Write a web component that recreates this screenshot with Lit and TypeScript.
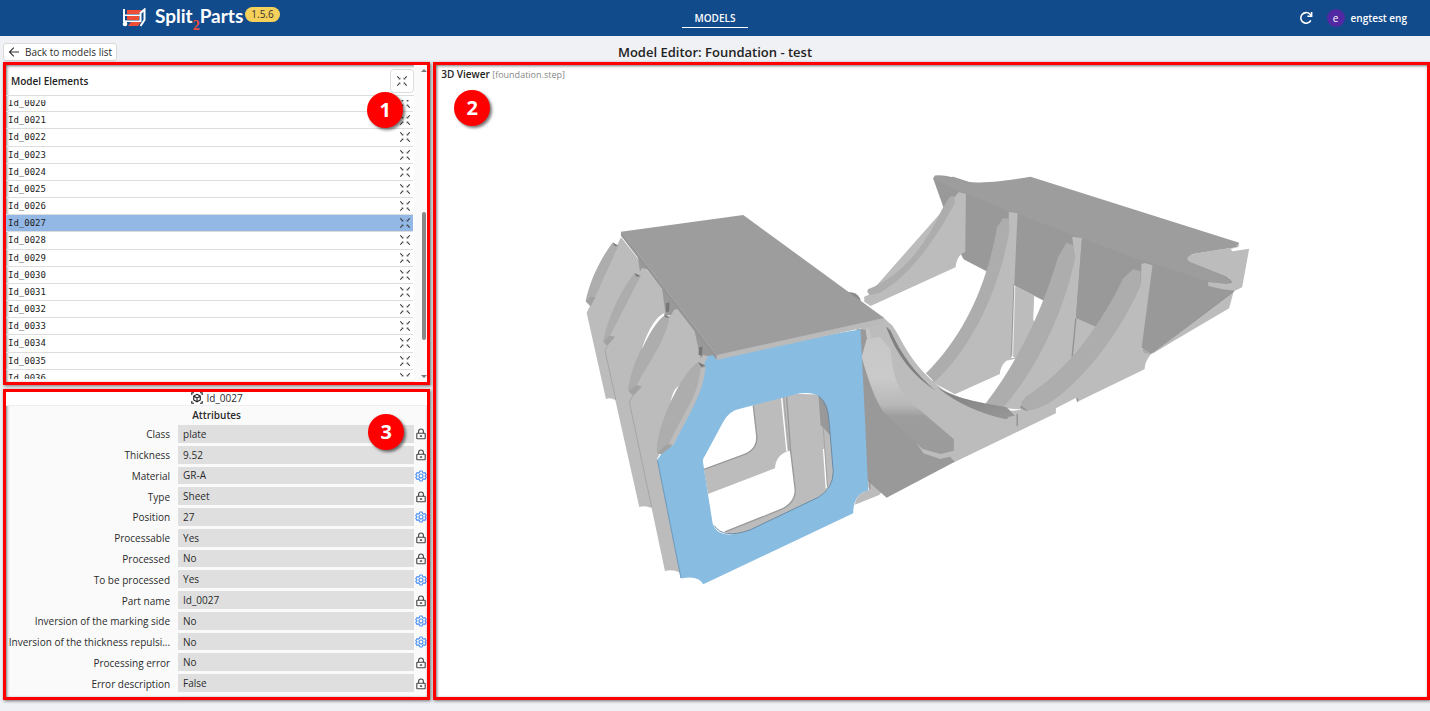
import { LitElement, html, css } from "lit";
import { customElement, property, state } from "lit/decorators.js";
import { classMap } from "lit/directives/class-map.js";

const focusIcon = html`<svg viewBox="0 0 12 12" width="12" height="12" aria-hidden="true">
  <g fill="none" stroke="#333" stroke-width="1.1">
    <path d="M1.300 1.300 3.300 3.500M10.700 1.300 8.700 3.500M1.300 10.700 3.300 8.500M10.700 10.700 8.700 8.500"/>
  </g>
  <path fill="#333" d="M4.300 4.500V2.500L2.400 4.200zM7.700 4.500V2.500l1.900 1.700zM4.300 7.500v2L2.400 7.800zM7.700 7.500v2l1.900-1.700z"/>
</svg>`;

const lockIcon = html`<svg viewBox="0 0 12 12" width="12" height="12" role="img" aria-label="Locked">
  <g fill="none" stroke="#444" stroke-width="1.1">
    <rect x="1.8" y="5.2" width="8.4" height="5.6" rx=".6"/>
    <path d="M3.6 5.2V3.4a2.4 2.4 0 0 1 4.8 0v1.8M6 7.2v1.8M4.8 8h2.4"/>
  </g>
</svg>`;

const gearIcon = html`<svg viewBox="0 0 24 24" width="12" height="12" role="img" aria-label="Editable">
  <g fill="none" stroke="#4a90f2" stroke-width="2.2" stroke-linejoin="round">
    <path d="M9.600 2h4.800l.7 3 2.100 1.200 3-.9 2.300 4.100-2.200 2.100v1l2.200 2.100-2.300 4.100-3-.9-2.100 1.200-.7 3H9.600l-.7-3-2.100-1.200-3 .9-2.300-4.100 2.200-2.100v-1L1.500 9.400l2.300-4.100 3 .9L8.900 5z"/>
    <circle cx="12" cy="12" r="4"/>
  </g>
</svg>`;

@customElement("model-scene")
class ModelScene extends LitElement {
  static styles = css`
    :host { display: block; }
    .scene { display: block; width: 100%; height: 100%; }
  `;

  render() {
    return html`
      <svg class="scene" viewBox="436 65 991 632" role="img" aria-label="Foundation model">
        <defs>
          <linearGradient id="bend" x1="0" y1="110" x2="0" y2="462" gradientUnits="userSpaceOnUse">
            <stop offset="0" stop-color="#c7c7c7"/><stop offset=".35" stop-color="#cacaca"/>
            <stop offset=".58" stop-color="#b8b8b8"/><stop offset=".68" stop-color="#9d9d9d"/>
            <stop offset="1" stop-color="#9b9b9b"/>
          </linearGradient>
          <linearGradient id="strip" x1="0" y1="0" x2="1" y2="1">
            <stop offset="0" stop-color="#7d7d7d"/><stop offset="1" stop-color="#999"/>
          </linearGradient>
        </defs>

        <!-- rear hull plate with its four ribs -->
        <g transform="translate(840 160) scale(.33333)">
          <path fill="#bcbcbc" d="M935 583 1182 392 1168 445 1010 538z"/>
          <path fill="#999" d="M280 56 310 140 362 275Q366 295 375 300L525 378 612 422 765 497 900 560 933 583 1185 392 1175 360 1100 300 340 50z"/>
          <path fill="#9d9d9d" d="M279 56 285 46Q318 44 345 55C370 68 410 76 572 50L1198 248 1190 262 1060 282Q1035 292 1045 305L1178 362 1150 374 1100 362 860 285 520 157 350 90z"/>
          <path fill="#bcbcbc" d="M1198 248 1196 261 1172 267 1178 274 1228 266 1207 382 1185 392 1148 388 1105 378V366L1160 372 1178 368 1170 354 1060 310Q1032 300 1048 287 1065 278 1190 262z"/>
          <path stroke="#888" stroke-width="2" d="M940 578 1182 394"/>
          <path fill="#bcbcbc" d="M345 110 357 96 378 102 376 276Q350 285 347 322L92 438 73 425V410L85 405z"/>
          <path fill="#adadad" d="M345 128 342 108 330 110 308 145C250 270 180 350 84 388L82 397 92 406 120 398C200 355 285 245 345 128z"/>
          <path fill="#bcbcbc" d="M525 378 583 407 580 480 596 500 560 590 528 596 480 560z"/>
          <path fill="#bcbcbc" d="M507 155 533 160 513 597Q485 605 480 642L345 703 275 665 420 470 505 215z"/>
          <path fill="none" stroke="#8b8b8b" stroke-width="2" d="M522 375 514 592"/>
          <path fill="none" stroke="#fff" stroke-width="2" d="M525 376 518 592"/>
          <path fill="#bcbcbc" d="M514 594H530L522 612 500 605z"/>
          <path fill="#fff" d="M528 596 500 602Q482 615 480 642L510 660z"/>
          <path fill="#adadad" d="M508 190 506 176 490 174 472 200C440 380 370 530 258 640L284 666C400 560 480 380 508 215z"/>
          <path fill="#bcbcbc" d="M697 230 726 234 708 475 765 497 810 515 760 620 560 750 440 740 640 430 705 295z"/>
          <path fill="none" stroke="#929292" stroke-width="4" d="M708 475 697 590"/>
          <path fill="#adadad" d="M704 282 699 255 680 248 655 290C605 460 530 610 436 732L490 742C600 620 675 440 706 295z"/>
          <path fill="#bcbcbc" d="M905 312 915 309 938 316 905 566 933 583Q915 605 914 628L713 725 709 713 648 745V760L345 905 270 770 540 750 750 610 903 370z"/>
          <path fill="#999" d="M726 240 903 308 880 328 850 355 768 500 708 475z"/>
          <path fill="#a8a8a8" d="M905 564 933 582 912 578z"/>
          <path fill="#adadad" d="M902 355 903 334 880 328 850 355C790 480 690 630 560 708L545 725 543 740 562 752C610 745 640 725 690 680 790 590 865 465 903 375z"/>
          <path fill="#929292" d="M543 737 562 750V756L540 742zM709 713 715 716V725H711z"/>
        </g>

        <!-- front cradle and bent plate -->
        <g transform="translate(840 300) scale(.33333)">
          <path fill="#bcbcbc" d="M75 535 130 570 118 585 45 614Q48 580 88 570z"/>
          <path fill="#bcbcbc" d="M62 85 133 55 155 75C195 165 235 230 300 265 365 300 430 315 500 325L532 343 560 330 560 380 345 485 240 520 65 170z"/>
          <path fill="#bcbcbc" d="M137 68 155 74C185 110 200 180 300 262L340 292 300 278 220 210z"/>
          <path fill="#808080" d="M140 80 152 92C185 165 225 220 288 272 220 230 170 165 140 84z"/>
          <path fill="url(#strip)" d="M292 260C340 295 415 305 500 322L525 347 508 350 500 358C420 340 340 305 292 260z"/>
          <path fill="none" stroke="#909090" stroke-width="4" d="M532 341V378"/>
          <path fill="#999" d="M50 85 75 535 140 593 345 485 330 470 300 476 250 458 140 300 82 118 78 90z"/>
          <path fill="#bcbcbc" d="M248 445 300 460 325 455 342 449 340 468 300 476 249 459z"/>
          <path fill="#c5c5c5" d="M77 88 86 85 95 115 82 118z"/>
          <path fill="url(#bend)" d="M80 118 120 110 152 148C160 250 185 290 240 330L342 418V452L302 462 248 447 130 335C100 290 85 235 65 172z"/>
          <path fill="none" stroke="#8c8c8c" stroke-width="3" d="M90 540V568"/>
        </g>

        <!-- left box with the highlighted plate -->
        <g transform="translate(570 200) scale(.33333)">
          <path fill="#bcbcbc" d="M153 112 142 135 128 128C90 180 65 235 48 305L60 318 50 338 108 597Q122 592 136 600L208 921Q225 915 245 924L285 1113Q310 1108 328 1117L345 1100 262 775 415 500 440 470z"/>
          <path fill="none" stroke="#a6a6a6" stroke-width="3" d="M112 437 105 452 138 600M190 587 178 605 245 921M262 780 333 1130"/>
          <path fill="#adadad" d="M128 128 145 137 75 292 62 318 47 304C60 240 90 180 128 128zM195 220 212 228 120 408 135 410 112 437 100 425C110 365 150 270 195 220zM283 342 299 352C285 425 230 500 200 556L215 560 190 587 174 572C180 500 235 395 283 342z"/>
          <path fill="#a2a2a2" d="M62 290 77 292 62 318 48 303zM118 407 135 410 112 437 101 424zM200 555 215 560 190 587 176 572z"/>
          <path fill="#777" d="M128 127 144 137 135 138zM193 219 212 228 200 230zM281 341 299 353 286 352z"/>
          <path fill="#fff" d="M283 340C255 350 228 405 216 448 235 405 262 360 283 347zM333 554Q305 565 300 622L315 590zM287 338 300 334 298 349z"/>
          <path fill="#999" d="M203 165 240 210 216 204 210 215zM276 262 323 326 312 330 303 345H287zM372 385 440 475 400 465 392 475z"/>
          <path fill="#777" d="M288 310 299 307 297 335H288zM387 442 398 440 396 466 386 465z"/>
          <path fill="#adadad" d="M385 486 407 499C400 590 350 650 308 737L280 765 262 758C252 700 330 520 385 486z"/>
          <path fill="#bcbcbc" d="M405 503 408 510C400 590 360 650 310 735L298 730C340 640 385 590 392 505z"/>
          <path fill="#a2a2a2" d="M290 733 308 737 280 766 262 758z"/>
          <path fill="#777" d="M384 486 407 497 394 501z"/>
          <path fill="#8a8a8a" d="M832 276Q860 275 870 295L875 310 860 300z"/>
          <path fill="#fff" d="M875 290H882V310L876 306z"/>

          <!-- interior seen through the opening -->
          <g transform="translate(0 540)">
            <path fill="#bcbcbc" d="M550 76 560 165Q565 208 520 225L402 268 414 342 615 265Q618 220 662 212L676 330Q676 370 630 390L465 456 500 468 560 450 745 360 795 300 780 45 640 40z"/>
            <path fill="none" stroke="#999" stroke-width="4" d="M550 76 560 165Q565 208 520 225L402 268M650 50 662 212 676 330Q676 370 630 390L465 456"/>
            <path fill="#999" d="M745 40 785 60 785 170 752 135z"/>
            <path fill="none" stroke="#fff" stroke-width="4" d="M635 52 651 214M761 207 769 325"/>
            <path fill="none" stroke="#999" stroke-width="2" d="M641 50 657 212M760 145 773 320"/>
            <path fill="#89bce1" fill-rule="evenodd" d="M415-72 872-152 876-70 882 50 895 332Q850 340 850 400L400 613Q385 585 333 596L262 240 272 225 310 195C370 80 400 35 407-40L403-50zM399 245Q398 235 405 227L460 125Q478 92 510 86L690 40Q772 30 777 110L790 275Q790 325 745 352L540 450Q445 485 428 430L414 342z"/>
            <path fill="none" stroke="#6b8ca5" stroke-width="3" d="M433 437Q460 478 540 450L745 352Q790 325 790 275L778 130Q775 70 745 48"/>
            <path fill="none" stroke="#6f9cbe" stroke-width="3" d="M263 242 333 594"/>
          </g>
          <path fill="#bababa" d="M437 463 942 353V370L440 480z"/>
          <path fill="#969696" d="M153 94 440 464V479L153 107z"/>
          <path fill="#9d9d9d" d="M153 95 520 45 835 275 943 354 440 465z"/>
        </g>
      </svg>
    `;
  }
}

interface Attribute { label: string; value: string; editable: boolean; }

@customElement("attribute-table")
class AttributeTable extends LitElement {
  @property({ attribute: false }) items: Attribute[] = [];

  static styles = css`
    :host { display: grid; grid-auto-rows: 1fr; min-height: 0; }
    .row {
      display: grid;
      grid-template-columns: 172fr 237fr 12px;
      align-items: stretch;
      min-height: 0;
    }
    .label {
      align-self: center;
      justify-self: end;
      padding-right: 8px;
      white-space: nowrap;
      line-height: 18px;
    }
    .value {
      min-width: 0;
      min-height: 0;
      margin: 1px 1px 2px 0;
      padding: 0 5px;
      border: 0;
      border-radius: 0;
      background: #dfdfdf;
      color: inherit;
      font: inherit;
      outline: none;
    }
    .icon { display: flex; align-items: center; }
  `;

  render() {
    return this.items.map((item, i) => html`
      <div class="row">
        <label class="label" for="attribute-${i}">${item.label}</label>
        <input class="value" id="attribute-${i}" readonly .value=${item.value}>
        <span class="icon">${item.editable ? gearIcon : lockIcon}</span>
      </div>
    `);
  }
}

@customElement("app-root")
class AppRoot extends LitElement {
  @state() private selected = "Id_0027";

  private elementIds = Array.from({ length: 17 }, (_, i) => `Id_00${20 + i}`);

  private partAttributes: Attribute[] = [
    { label: "Class", value: "plate", editable: false },
    { label: "Thickness", value: "9.52", editable: false },
    { label: "Material", value: "GR-A", editable: true },
    { label: "Type", value: "Sheet", editable: false },
    { label: "Position", value: "27", editable: true },
    { label: "Processable", value: "Yes", editable: false },
    { label: "Processed", value: "No", editable: false },
    { label: "To be processed", value: "Yes", editable: true },
    { label: "Part name", value: "Id_0027", editable: false },
    { label: "Inversion of the marking side", value: "No", editable: true },
    { label: "Inversion of the thickness repulsi...", value: "No", editable: true },
    { label: "Processing error", value: "No", editable: false },
    { label: "Error description", value: "False", editable: false },
  ];

  static styles = css`
    :host {
      display: flex;
      flex-direction: column;
      height: 100vh;
      overflow: hidden;
      background: #f0f1f5;
      color: #2b2b2b;
      font: 10px/16px "Open Sans", "Noto Sans", sans-serif;
    }
    button { font: inherit; color: inherit; cursor: pointer; }
    svg { display: block; }

    .topbar {
      display: grid;
      grid-template-columns: 1fr auto 1fr;
      align-items: center;
      height: 36px;
      flex: none;
      background: #124b8b;
      color: #fff;
      font-weight: 600;
    }
    .brand { display: flex; align-items: center; padding-left: 122px; }
    .name {
      display: flex;
      margin: -4px 0 0 8px;
      font: 700 19px/24px Lato, sans-serif;
    }
    .two {
      align-self: flex-end;
      margin-bottom: -6px;
      color: #ee4f37;
      font: 700 14px/16px "Liberation Serif", serif;
    }
    .version {
      margin: -8px 0 0 2px;
      padding: 0 6px;
      border-radius: 8px;
      background: #f5d05a;
      color: #333;
      line-height: 15px;
      font-weight: 400;
    }
    .tab {
      padding: 0 13px;
      border-bottom: 1px solid #fff;
      color: inherit;
      line-height: 18px;
      text-decoration: none;
    }
    .account {
      display: flex;
      align-items: center;
      justify-content: flex-end;
      padding-right: 23px;
    }
    .refresh { padding: 0; margin-right: 14px; border: 0; background: none; }
    .avatar {
      width: 18px;
      margin-right: 6px;
      border-radius: 50%;
      background: #5229a3;
      line-height: 18px;
      font-weight: 400;
      text-align: center;
    }

    .subbar {
      display: grid;
      grid-template-columns: 1fr auto 1fr;
      align-items: end;
      height: 26px;
      flex: none;
    }
    .back {
      display: flex;
      align-items: center;
      justify-self: start;
      gap: 5px;
      height: 18px;
      margin: 0 0 1px 3px;
      padding: 0 4px;
      border: 1px solid #d9d9d9;
      border-radius: 3px;
      background: #fff;
    }
    .title {
      margin: 0;
      color: #222;
      font-size: 13px;
      line-height: 20px;
      font-weight: 600;
    }

    .workspace {
      display: grid;
      grid-template-columns: 3fr 7fr;
      gap: 3px;
      flex: 1;
      min-height: 0;
      padding: 0 0 11px 3px;
    }
    .side {
      display: grid;
      grid-template-rows: 323fr 311fr;
      gap: 4px;
      min-width: 0;
      min-height: 0;
    }
    .panel {
      position: relative;
      box-sizing: border-box;
      min-width: 0;
      min-height: 0;
      border: 3px solid #f00;
      background: #fff;
      box-shadow: 1px 1px 3px #0008, inset 1px 1px 3px #0008;
    }
    .marker {
      position: absolute;
      width: 36px;
      border-radius: 50%;
      background: #f00;
      box-shadow: 2px 2px 3px #0008;
      color: #fff;
      font: 700 20px/36px "Noto Sans", "DejaVu Sans", sans-serif;
      text-align: center;
    }
    .marker.list { top: 27px; right: 24px; }
    .marker.view { top: 25px; left: 18px; }
    .marker.attrs { top: 22px; right: 23px; }

    .elements {
      display: grid;
      grid-template-columns: 1fr 13px;
    }
    .listing { display: flex; flex-direction: column; min-width: 0; min-height: 0; }
    .listing-head {
      display: flex;
      align-items: center;
      justify-content: space-between;
      height: 29px;
      flex: none;
      padding: 1px 0 0 5px;
      border-bottom: 1px solid #ddd;
      color: #222;
    }
    .heading { margin: 0; font-size: 10px; line-height: 16px; font-weight: 600; }
    .fit {
      display: grid;
      place-items: center;
      width: 24px;
      height: 24px;
      padding: 0;
      border: 1px solid #ddd;
      border-radius: 4px;
      background: #fff;
    }
    .clip { display: flex; flex: 1; min-height: 0; margin: 4px 1px 3px 0; overflow: hidden; }
    .rows {
      display: flex;
      flex-direction: column;
      flex: 1;
      margin: -5px 0 -8px;
      padding: 0;
      list-style: none;
    }
    .item {
      display: flex;
      align-items: stretch;
      flex: 1;
      min-height: 0;
      box-sizing: border-box;
      border-bottom: 1px solid #ddd;
    }
    .item.on { background: #94b8e6; }
    .pick, .focus { padding: 0 2px; border: 0; background: none; }
    .pick {
      flex: 1;
      color: #222;
      font: 9px/16px "DejaVu Sans Mono", monospace;
      text-align: left;
    }
    .focus { display: flex; align-items: center; }
    .scroll {
      display: flex;
      flex-direction: column;
      align-items: center;
      padding: 4px 0 4px 6px;
      background: #fafafa;
    }
    .before { flex: 138; }
    .thumb { flex: 126; width: 4px; border-radius: 2px; background: #888; }
    .after { flex: 35; }
    .arrow { border: 3px solid transparent; border-top: 0; border-bottom: 3px solid #777; }
    .arrow.down { border-top: 3px solid #777; border-bottom: 0; }

    .details {
      display: flex;
      flex-direction: column;
      background: #fafafa;
    }
    .current {
      display: flex;
      align-items: center;
      justify-content: center;
      gap: 4px;
      height: 12px;
      flex: none;
      padding-bottom: 1px;
      border-bottom: 1px solid #eee;
      background: #fff;
    }
    .current svg { flex: none; }
    .section { margin: 0; font-size: 10px; line-height: 18px; font-weight: 600; text-align: center; }
    .table { flex: 1; padding-bottom: 2px; }
    .next { height: 1px; margin: 0 13px 0 172px; background: #dfdfdf; }

    .caption { padding: 1px 5px; color: #888; font-size: 9px; line-height: 18px; }
    .caption .heading { display: inline; color: #222; }
    .model { position: absolute; inset: 0; }
  `;

  render() {
    return html`
      <header class="topbar">
        <div class="brand">
          <svg viewBox="0 0 25 20" width="25" height="20" aria-hidden="true">
            <path fill="#ee4f37" d="M5 2h15l-3 4H5zM5 8h12v4H5zM9 14h10l-3 4H6z"/>
            <path fill="none" stroke="#fff" stroke-width="2" d="M2 1v12l3 1M18.500 14V5l4-3.500V12l-4 6"/>
            <path fill="#fff" d="M3 6.500h15V8H3zM4 12.500h14V14H4z"/>
            <circle cx="3" cy="16" r="2.300" fill="#fff"/>
          </svg>
          <span class="name">Split<span class="two">2</span>Parts</span>
          <span class="version">1.5.6</span>
        </div>
        <a class="tab" href="#models">MODELS</a>
        <div class="account">
          <button class="refresh" aria-label="Refresh">
            <svg viewBox="0 0 14 14" width="14" height="14">
              <path fill="none" stroke="#fff" stroke-width="1.600" d="M11.800 9.300A5.300 5.300 0 1 1 11 3.300L12.600 5"/>
              <path fill="none" stroke="#fff" stroke-width="1.600" d="M12.600 1v4.200H8.400"/>
            </svg>
          </button>
          <span class="avatar">e</span>
          <span>engtest eng</span>
        </div>
      </header>

      <div class="subbar">
        <button class="back">
          <svg viewBox="0 0 12 12" width="12" height="12" aria-hidden="true">
            <path fill="none" stroke="#333" stroke-width="1.100" d="M11 6H1.500M5.800 1.700 1.500 6l4.300 4.300"/>
          </svg>
          Back to models list
        </button>
        <h1 class="title">Model Editor: Foundation - test</h1>
      </div>

      <main class="workspace">
        <div class="side">
          <section class="panel elements">
            <div class="listing">
              <div class="listing-head">
                <h2 class="heading">Model Elements</h2>
                <button class="fit" aria-label="Fit all">${focusIcon}</button>
              </div>
              <div class="clip">
                <ul class="rows">
                  ${this.elementIds.map((id) => html`
                    <li class=${classMap({ item: true, on: id === this.selected })}>
                      <button class="pick" @click=${() => (this.selected = id)}>${id}</button>
                      <button class="focus" aria-label="Focus ${id}">${focusIcon}</button>
                    </li>
                  `)}
                </ul>
              </div>
            </div>
            <div class="scroll">
              <span class="arrow"></span>
              <span class="before"></span>
              <span class="thumb"></span>
              <span class="after"></span>
              <span class="arrow down"></span>
            </div>
            <span class="marker list">1</span>
          </section>

          <section class="panel details">
            <div class="current">
              <svg viewBox="0 0 12 12" width="12" height="12" aria-hidden="true">
                <g fill="none" stroke="#222" stroke-width="1.100">
                  <path d="M.8 3V.8H3M9 .8h2.200V3M11.200 9v2.200H9M3 11.200H.8V9"/>
                  <path d="M6 2.300 9.300 4v4L6 9.800 2.700 8V4zM2.700 4 6 6l3.300-2M6 6v3.800"/>
                </g>
              </svg>
              ${this.selected}
            </div>
            <h2 class="section">Attributes</h2>
            <attribute-table class="table" .items=${this.partAttributes}></attribute-table>
            <div class="next"></div>
            <span class="marker attrs">3</span>
          </section>
        </div>

        <section class="panel viewer">
          <model-scene class="model"></model-scene>
          <div class="caption"><h2 class="heading">3D Viewer</h2> [foundation.step]</div>
          <span class="marker view">2</span>
        </section>
      </main>
    `;
  }
}
